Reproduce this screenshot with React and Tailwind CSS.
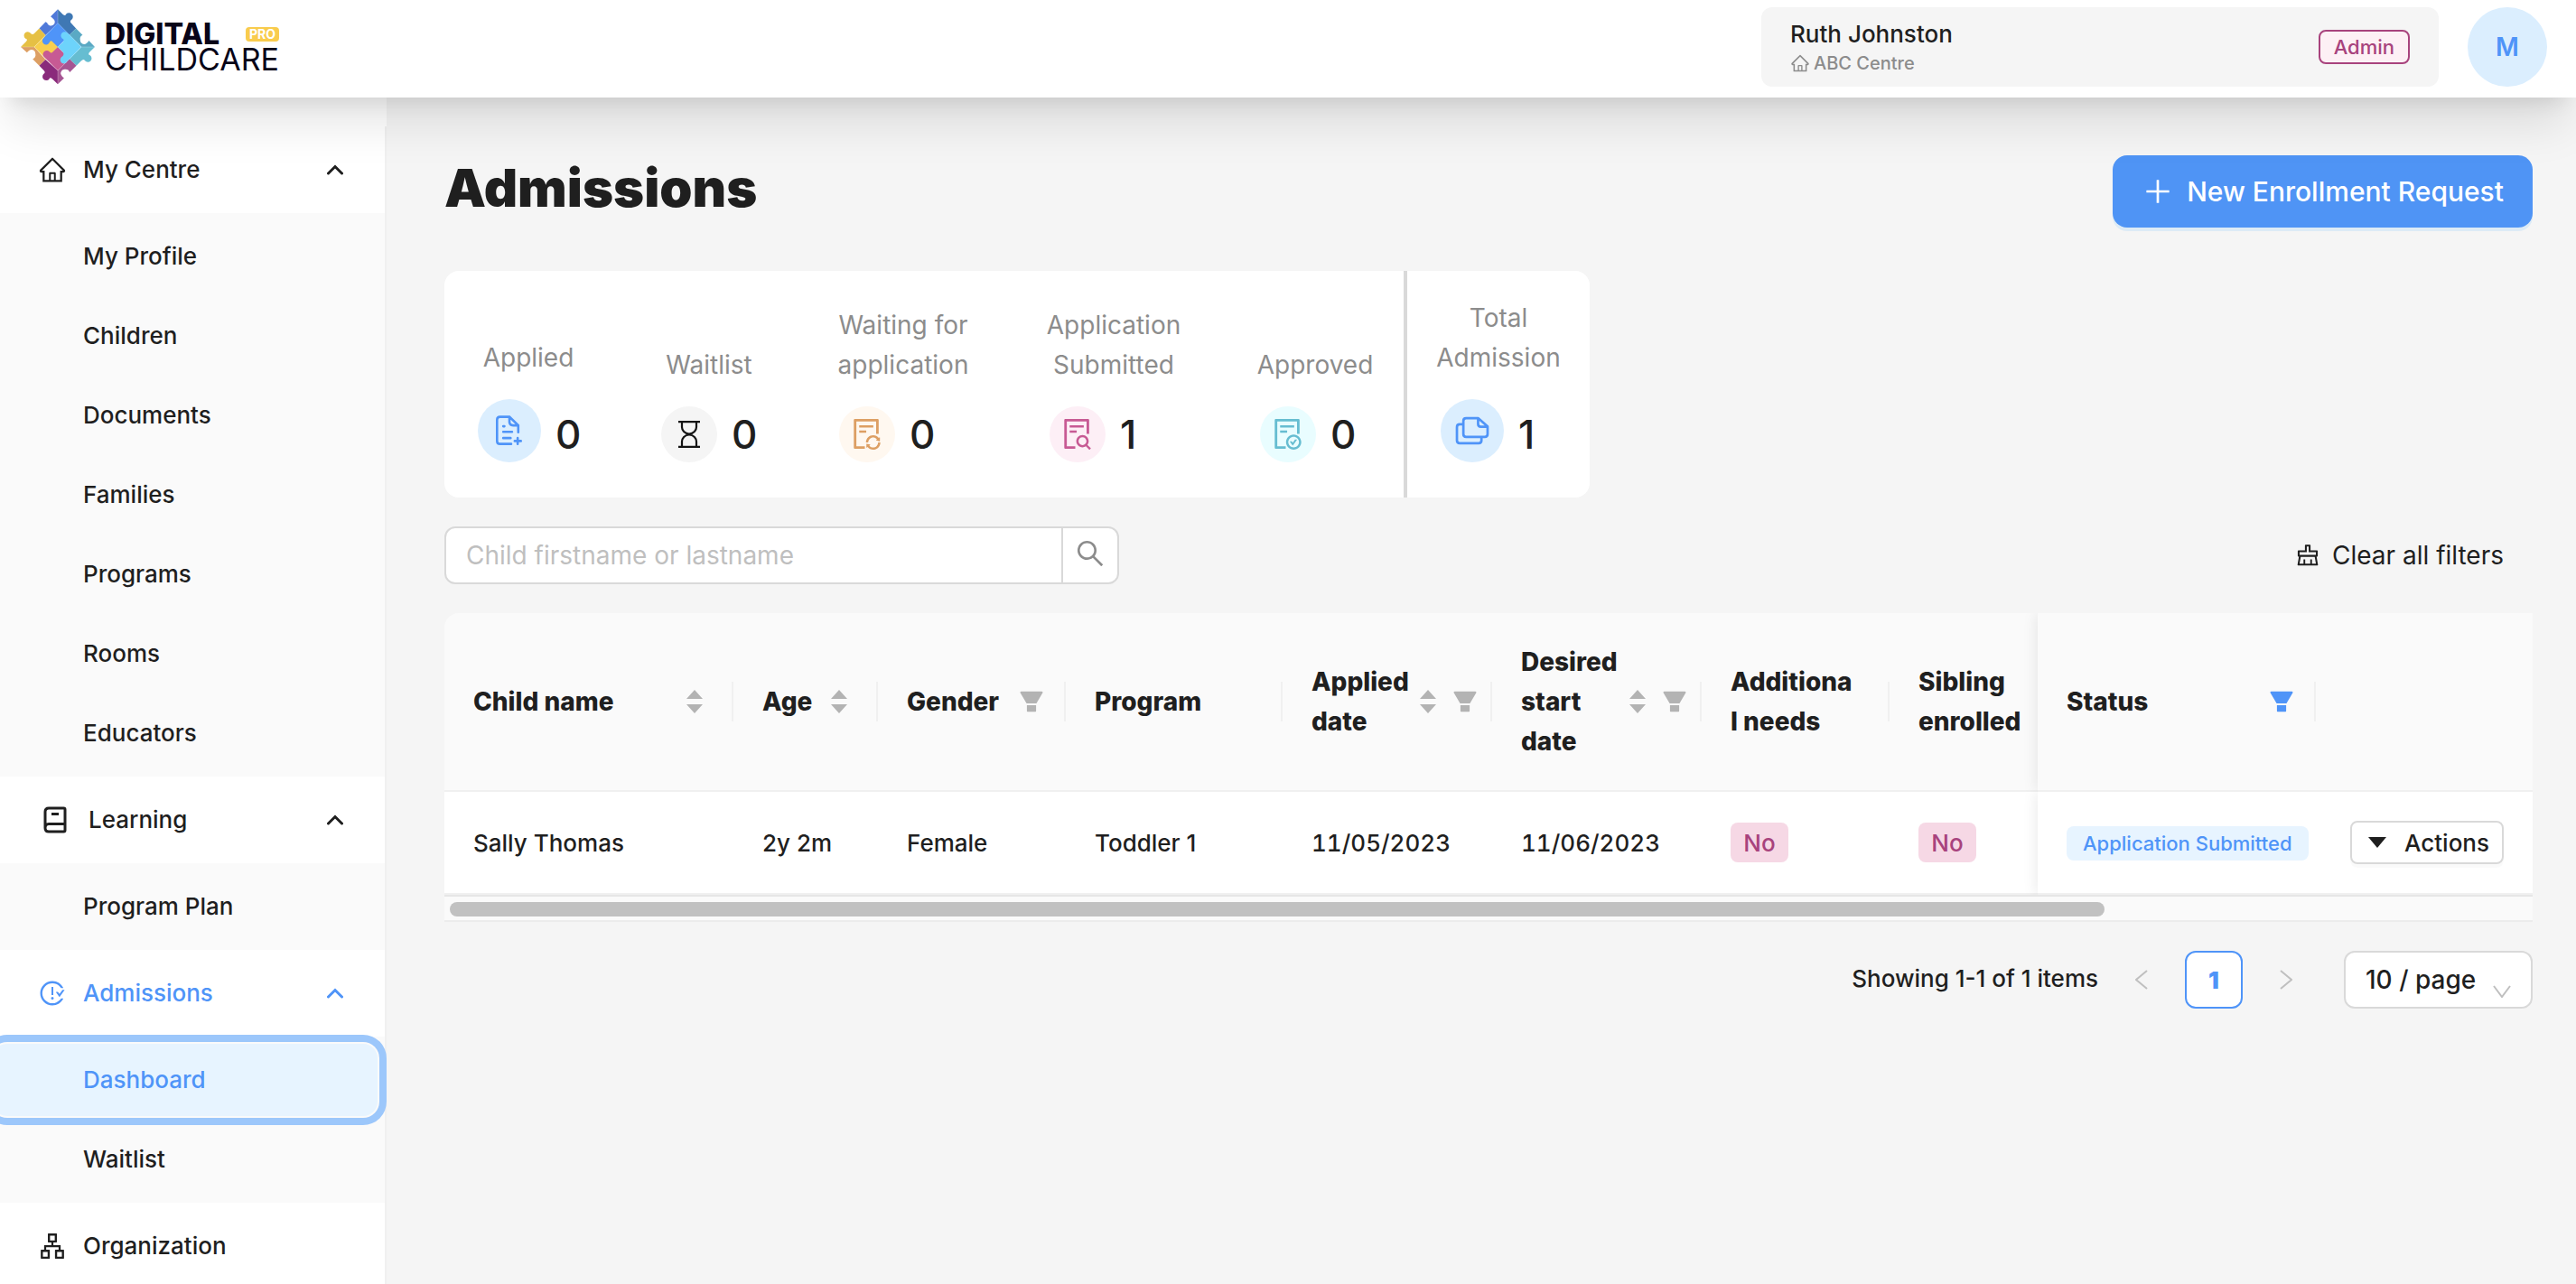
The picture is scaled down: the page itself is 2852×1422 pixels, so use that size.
import {
  AiOutlineHome,
  AiOutlineIssuesClose,
  AiOutlineApartment,
  AiOutlineClear,
  AiOutlineSearch,
  AiOutlinePlus,
  AiFillFilter,
  AiOutlineFileSync,
  AiOutlineFileSearch,
  AiOutlineFileDone,
} from "react-icons/ai";

function LogoMark() {
  return (
    <svg viewBox="17 16 250 254" className="h-[84px] w-[84px] shrink-0" aria-hidden="true">
      <path fill="#4f79d9" d="M142 17 118 41 Q124 46 130 52 A12 12 0 1 1 108 66 Q108 61 101 59 L80 81 101 104 142 65Z" />
      <path fill="#3f78b4" d="M142 17 159 34 Q168 41 170 33 A12.500 12.500 0 1 1 189 51 Q180 57 187 64 L203 81 180 104 142 65Z" />
      <path fill="#5aa9c4" d="M203 81 225 103 Q214 108 217 121 A13 13 0 0 0 238 131 Q244 127 246 122 L266 143 H221 L180 104Z" />
      <path fill="#66bdd1" d="M266 143 249 160 Q241 169 250 171 A12.500 12.500 0 1 1 233 189 Q228 181 220 190 L204 206 181 183 221 143Z" />
      <path fill="#e6c044" d="M80 81 101 104 63 143 H18 L36 125 Q43 117 34 115 A12.500 12.500 0 1 1 51 97 Q57 105 64 97Z" />
      <path fill="#dd9f63" d="M18 143 H63 L101 185 80 206 58 184 Q70 178 67 166 A13 13 0 0 0 47 154 Q41 157 39 162Z" />
      <path fill="#8a2a7b" d="M101 185 142 222 V268 L124 250 Q115 243 113 251 A12.500 12.500 0 1 1 94 234 Q102 228 96 222 L80 206Z" />
      <path fill="#a65593" d="M181 183 204 206 182 228 Q178 217 166 218 A13 13 0 0 0 153 236 Q156 243 163 247 L142 268 V222Z" />
      <path fill="#f8cf4e" d="M142 143 102 183 63 143 102 104 122 122Z" />
      <path fill="#f8cf4e" d="M110 128 134 124 142 143 122 166 90 160Z" />
      <path fill="#4f94f8" d="M142 63 182 103 142 143 125 126 Q117 119 114 128 A12.500 12.500 0 1 1 95 113 L102 104Z" />
      <path fill="#c75a94" d="M142 143 182 183 142 222 102 183 95 176 A12.500 12.500 0 1 1 115 160 Q120 166 126 159Z" />
      <path fill="#6dd3fb" d="M182 103 221 143 182 183 174 191 A12.500 12.500 0 1 1 154 177 Q166 170 159 160 L142 143 160 126 Q166 119 156 114 A12.500 12.500 0 1 1 174 96Z" />
      <path d="M142 63 221 143 142 222 63 143Z M142 17V63 M142 222V268 M18 143H63 M221 143H266" fill="none" stroke="#fff" strokeOpacity="0.35" strokeWidth="2" />
    </svg>
  );
}

function BookIcon() {
  return (
    <svg viewBox="0 0 26 30" className="h-[30px] w-[26px]" fill="none" stroke="currentColor" strokeWidth="3" aria-hidden="true">
      <path d="M6 2H22.500Q24 2 24 3.500V26.500Q24 28 22.500 28H6Q2 28 2 24V6Q2 2 6 2ZM2 24Q2 19.500 6 19.500H24M9 8.500H17" />
    </svg>
  );
}

function ChevronUp() {
  return (
    <svg viewBox="0 0 18 12" className="h-3 w-[18px]" fill="none" stroke="currentColor" strokeWidth="3" aria-hidden="true">
      <path d="M1.500 10 9 2.500 16.500 10" strokeLinecap="round" />
    </svg>
  );
}

function HourglassIcon() {
  return (
    <svg viewBox="0 0 24 30" className="h-[30px] w-6" fill="none" stroke="#141414" strokeWidth="2.200" aria-hidden="true">
      <path d="M0 1.200H24M0 28.800H24M4 1V7C4 10.500 7 14.500 12 14.500S20 10.500 20 7V1M4 29V23C4 19.500 7 15.500 12 15.500S20 19.500 20 23V29" />
    </svg>
  );
}

function FilePlusIcon() {
  return (
    <svg viewBox="84 74 92 104" className="h-[34px] w-[30px]" fill="none" stroke="#4f94f8" strokeWidth="8" strokeLinecap="round" aria-hidden="true">
      <path d="M136 171H98Q88 171 88 161V89Q88 79 98 79H130L160 108V131M130 80V96Q130 107 143 108H159M109 111H113M109 130H139M109 151H134M158 151V171M148 161H169" />
    </svg>
  );
}

function CopiesIcon() {
  return (
    <svg viewBox="1381 79 112 94" className="h-[32px] w-[38px]" fill="none" stroke="#4f94f8" strokeWidth="8" strokeLinejoin="round" aria-hidden="true">
      <path d="M1417 85H1456L1487 112V137Q1487 146 1478 146H1417Q1408 146 1408 137V94Q1408 85 1417 85ZM1456 85V104Q1456 113 1465 113H1487M1408 105H1396Q1387 105 1387 114V158Q1387 167 1396 167H1458Q1467 167 1467 158V147" />
    </svg>
  );
}

function Sorter({ label }) {
  return (
    <button type="button" aria-label={label} className="text-[#b3b3b3]">
      <svg viewBox="0 0 18 26" className="h-[26px] w-[18px]" fill="currentColor" aria-hidden="true">
        <path d="M9 0 18 10H0ZM9 26 0 16H18Z" />
      </svg>
    </button>
  );
}

function FilterButton({ label, active }) {
  return (
    <button type="button" aria-label={label} className={active ? "text-[#4f94f8]" : "text-[#b3b3b3]"}>
      <AiFillFilter className="h-8 w-8" />
    </button>
  );
}

const linkText = "text-[26px] font-medium leading-[44px]";

function MenuGroup({ icon, title, items, active, wide, open = true }) {
  return (
    <li>
      <button
        type="button"
        className={`my-2 flex h-20 w-full items-center pr-[46px] text-left ${linkText} ${wide ? "gap-6 pl-12" : "gap-[18px] pl-[42px]"} ${active ? "text-[#4f94f8]" : ""}`}
      >
        {icon}
        <span className="flex-1">{title}</span>
        {open && <ChevronUp />}
      </button>
      {open && (
        <ul className="flex flex-col gap-2 bg-[#fafafa] py-2">
          {items.map((item) => (
            <li key={item.name}>
              <a
                href="#"
                className={`-ml-2 mr-2 flex h-20 items-center rounded-2xl pl-[100px] ${linkText} ${
                  item.selected ? "bg-[#e7f4ff] text-[#4f94f8] ring-8 ring-[#9cc7fb] ring-offset-2 ring-offset-[#fafafa]" : ""
                }`}
              >
                {item.name}
              </a>
            </li>
          ))}
        </ul>
      )}
    </li>
  );
}

function Stat({ label, value, circle, width, children }) {
  return (
    <div className={`flex flex-col items-start gap-6 ${width}`}>
      <div className="flex w-full justify-center text-center text-[28px] leading-[44px] whitespace-pre text-[#8c8c8c]">{label}</div>
      <div className="flex items-end gap-4">
        <span className={`flex items-center justify-center rounded-full ${circle}`}>{children}</span>
        <span className="text-[44px] leading-[62px] font-medium">{value}</span>
      </div>
    </div>
  );
}

function HeadCell({ children, controls, divider = true, className = "" }) {
  return (
    <th scope="col" className={`border-b-2 border-[#f0f0f0] bg-[#fafafa] p-0 text-left font-extrabold ${className}`}>
      <div className="flex items-center">
        <div className="flex flex-1 items-center justify-between py-8 pl-8 text-[28px] leading-[44px]">
          <span className="whitespace-pre">{children}</span>
          {controls}
        </div>
        {divider && <span className="h-11 w-0.5 shrink-0 bg-[#f0f0f0]" />}
      </div>
    </th>
  );
}

const cell = "border-b-2 border-[#f0f0f0] bg-white py-8 pl-8 pr-0 text-[26px] font-medium whitespace-nowrap";

function NoTag() {
  return (
    <span className="inline-flex h-11 w-16 items-center justify-center rounded-lg bg-[#f6d8e5] text-[26px] text-[#a8437d]">No</span>
  );
}

export default function App() {
  return (
    <div className="flex h-screen flex-col overflow-hidden bg-[#f5f5f5] font-['Inter',sans-serif] text-[#1f1f1f]">
      <header className="relative z-10 flex h-[108px] shrink-0 items-center justify-between bg-white pr-8 pb-1 pl-[22px] shadow-[0_40px_50px_-10px_rgba(0,0,0,0.1),0_16px_20px_-12px_rgba(0,0,0,0.1)]">
        <a href="#" className="flex items-center gap-2.5 text-[#080418]">
          <LogoMark />
          <span className="flex flex-col">
            <span className="flex items-center justify-between text-[32px] leading-[28px] font-extrabold">
              DIGITAL
              <span className="rounded bg-[#f9cc4d] px-1 text-[14px] leading-4 font-bold text-white">PRO</span>
            </span>
            <span className="text-[34px] leading-[28px]">CHILDCARE</span>
          </span>
        </a>
        <div className="flex items-center gap-8">
          <div className="flex h-[88px] w-[750px] items-center justify-between rounded-xl bg-[#f5f5f5] px-8">
            <div>
              <div className="text-[26px] leading-9 font-medium">Ruth Johnston</div>
              <div className="flex items-center gap-1 text-[20px] leading-7 font-medium text-[#8c8c8c]">
                <AiOutlineHome className="h-[22px] w-[22px]" />
                ABC Centre
              </div>
            </div>
            <span className="rounded-lg border-2 border-[#a8437d] bg-[#fdf0f5] px-[15px] text-[22px] leading-[34px] font-medium text-[#a8437d]">
              Admin
            </span>
          </div>
          <button type="button" className="h-[88px] w-[88px] rounded-full bg-[#dbeefe] text-[28px] font-semibold text-[#4f94f8]">
            M
          </button>
        </div>
      </header>

      <div className="flex min-h-0 flex-1">
        <aside className="w-[428px] shrink-0 overflow-hidden bg-white pt-8">
          <nav className="min-h-full border-r-2 border-[#f0f0f0]">
            <ul className="flex flex-col">
              <MenuGroup
                icon={<AiOutlineHome className="h-8 w-8" />}
                title="My Centre"
                items={[
                  { name: "My Profile" },
                  { name: "Children" },
                  { name: "Documents" },
                  { name: "Families" },
                  { name: "Programs" },
                  { name: "Rooms" },
                  { name: "Educators" },
                ]}
              />
              <MenuGroup icon={<BookIcon />} title="Learning" wide items={[{ name: "Program Plan" }]} />
              <MenuGroup
                icon={<AiOutlineIssuesClose className="h-8 w-8" />}
                title="Admissions"
                active
                items={[{ name: "Dashboard", selected: true }, { name: "Waitlist" }]}
              />
              <MenuGroup icon={<AiOutlineApartment className="h-8 w-8" />} title="Organization" open={false} />
            </ul>
          </nav>
        </aside>

        <main className="min-w-0 flex-1 pt-16 pr-12 pl-16">
          <div className="flex items-start justify-between">
            <h1 className="text-[58px] leading-[72px] font-black">Admissions</h1>
            <button
              type="button"
              className="flex h-20 items-center gap-3.5 rounded-2xl bg-[#4f94f5] px-8 text-[30px] font-medium text-white shadow-[0_4px_0_rgba(5,145,255,0.1)]"
            >
              <AiOutlinePlus className="h-9 w-9" />
              New Enrollment Request
            </button>
          </div>

          <section className="mt-12 flex w-fit rounded-2xl bg-white">
            <div className="flex items-end gap-[91px] border-r-4 border-[#d9d9d9] px-[37px] pt-[30px] pb-[39px]">
              <Stat label="Applied" value="0" width="w-28" circle="h-[70px] w-[70px] bg-[#dbeefe]">
                <FilePlusIcon />
              </Stat>
              <Stat label="Waitlist" value="0" width="w-[106px]" circle="h-[62px] w-[62px] bg-[#f5f5f5]">
                <HourglassIcon />
              </Stat>
              <Stat label={"Waiting for\napplication"} value="0" width="w-[142px]" circle="h-[62px] w-[62px] bg-[#fff8f0]">
                <AiOutlineFileSync className="h-10 w-10 text-[#dd9f63]" />
              </Stat>
              <Stat label={"Application\nSubmitted"} value="1" width="w-[142px]" circle="h-[62px] w-[62px] bg-[#fdeff6]">
                <AiOutlineFileSearch className="h-10 w-10 text-[#c75a94]" />
              </Stat>
              <Stat label="Approved" value="0" width="w-[122px]" circle="h-[62px] w-[62px] bg-[#e9fdff]">
                <AiOutlineFileDone className="h-10 w-10 text-[#66bdd1]" />
              </Stat>
            </div>
            <div className="flex items-end px-[37px] pt-[30px] pb-[39px]">
              <Stat label={"Total\nAdmission"} value="1" width="w-32" circle="h-[70px] w-[70px] bg-[#dbeefe]">
                <CopiesIcon />
              </Stat>
            </div>
          </section>

          <div className="mt-8 flex items-center justify-between">
            <form className="flex h-16 w-[747px] overflow-hidden rounded-xl border-2 border-[#d9d9d9] bg-white">
              <input
                type="text"
                aria-label="Search children"
                placeholder="Child firstname or lastname"
                className="min-w-0 flex-1 px-[22px] text-[28px] outline-none placeholder:text-[#bfbfbf]"
              />
              <button type="button" aria-label="Search" className="flex w-[62px] items-center justify-center border-l-2 border-[#d9d9d9] pb-1 text-[#8c8c8c]">
                <AiOutlineSearch className="h-9 w-9" />
              </button>
            </form>
            <button type="button" className="flex h-16 items-center gap-3 px-8 text-[28px]">
              <AiOutlineClear className="h-[30px] w-[30px]" />
              Clear all filters
            </button>
          </div>

          <div className="mt-8 overflow-hidden rounded-tl-2xl">
            <table className="w-full table-fixed border-separate border-spacing-0">
              <colgroup>
                <col className="w-[320px]" />
                <col className="w-[160px]" />
                <col className="w-[208px]" />
                <col className="w-[240px]" />
                <col className="w-[232px]" />
                <col className="w-[232px]" />
                <col className="w-[208px]" />
                <col />
                <col className="w-[308px]" />
                <col className="w-[240px]" />
              </colgroup>
              <thead>
                <tr>
                  <HeadCell controls={<span className="mr-8 flex items-center"><Sorter label="Sort by child name" /></span>}>Child name</HeadCell>
                  <HeadCell controls={<span className="mr-8 flex items-center"><Sorter label="Sort by age" /></span>}>Age</HeadCell>
                  <HeadCell controls={<span className="mr-5 flex items-center"><FilterButton label="Filter by gender" /></span>}>Gender</HeadCell>
                  <HeadCell>Program</HeadCell>
                  <HeadCell
                    controls={
                      <span className="mr-3 flex items-center gap-4">
                        <Sorter label="Sort by applied date" />
                        <FilterButton label="Filter by applied date" />
                      </span>
                    }
                  >
                    {"Applied\ndate"}
                  </HeadCell>
                  <HeadCell
                    controls={
                      <span className="mr-3 flex items-center gap-4">
                        <Sorter label="Sort by desired start date" />
                        <FilterButton label="Filter by desired start date" />
                      </span>
                    }
                  >
                    {"Desired\nstart\ndate"}
                  </HeadCell>
                  <HeadCell>{"Additiona\nl needs"}</HeadCell>
                  <HeadCell divider={false}>{"Sibling\nenrolled"}</HeadCell>
                  <HeadCell
                    className="shadow-[0_0_16px_rgba(0,0,0,0.1)] [clip-path:inset(0_0_0_-20px)]"
                    controls={<span className="mr-5 flex items-center"><FilterButton label="Filter by status" active /></span>}
                  >
                    Status
                  </HeadCell>
                  <td className="border-b-2 border-[#f0f0f0] bg-[#fafafa]" />
                </tr>
              </thead>
              <tbody>
                <tr>
                  <td className={cell}>Sally Thomas</td>
                  <td className={cell}>2y 2m</td>
                  <td className={cell}>Female</td>
                  <td className={cell}>Toddler 1</td>
                  <td className={`${cell} tabular-nums`}>11/05/2023</td>
                  <td className={`${cell} tabular-nums`}>11/06/2023</td>
                  <td className={cell}><NoTag /></td>
                  <td className={cell}><NoTag /></td>
                  <td className={`${cell} shadow-[0_0_16px_rgba(0,0,0,0.1)] [clip-path:inset(0_0_0_-20px)]`}>
                    <span className="inline-flex h-[38px] items-center rounded-lg bg-[#e7f4ff] px-[18px] align-middle text-[22px] text-[#4f94f8]">
                      Application Submitted
                    </span>
                  </td>
                  <td className={cell}>
                    <div className="flex justify-end pr-8">
                      <button
                        type="button"
                        className="flex h-12 w-[170px] items-center justify-between rounded-lg border-2 border-[#d9d9d9] bg-white pr-3.5 pl-[18px] text-[26px] shadow-[0_4px_0_rgba(0,0,0,0.02)]"
                      >
                        <svg viewBox="0 0 20 12" className="h-3 w-5" fill="currentColor" aria-hidden="true">
                          <path d="M0 0H20L10 12Z" />
                        </svg>
                        Actions
                      </button>
                    </div>
                  </td>
                </tr>
              </tbody>
            </table>
            <div className="border-y-2 border-t-[#e6e6e6] border-b-[#ececec] bg-[#fafafa] px-1.5 pt-1.5 pb-1">
              <div className="h-4 w-[calc(80%-8px)] rounded-full bg-[#c1c1c1]" />
            </div>
          </div>

          <div className="mt-8 flex items-center justify-end text-[26px] font-medium">
            <span className="pb-1">Showing 1-1 of 1 items</span>
            <button type="button" aria-label="Previous page" className="flex h-16 w-24 items-center justify-center text-[#bfbfbf]">
              <svg viewBox="0 0 14 22" className="h-[22px] w-3.5" fill="none" stroke="currentColor" strokeWidth="2" aria-hidden="true">
                <path d="M13 1 1 11 13 21" />
              </svg>
            </button>
            <button type="button" className="h-16 w-16 rounded-xl border-2 border-[#4f94f8] bg-white font-black text-[#4f94f8]">
              1
            </button>
            <button type="button" aria-label="Next page" className="flex h-16 w-24 items-center justify-center text-[#bfbfbf]">
              <svg viewBox="0 0 14 22" className="h-[22px] w-3.5" fill="none" stroke="currentColor" strokeWidth="2" aria-hidden="true">
                <path d="M1 1 13 11 1 21" />
              </svg>
            </button>
            <div className="relative ml-4">
              <select
                aria-label="Page size"
                defaultValue="10"
                className="h-16 w-[209px] appearance-none rounded-xl border-2 border-[#d9d9d9] bg-white pl-[22px] text-[28px] font-medium"
              >
                <option value="10">10 / page</option>
                <option value="20">20 / page</option>
              </select>
              <svg viewBox="0 0 20 14" className="pointer-events-none absolute right-6 bottom-3 h-3.5 w-5" fill="none" stroke="#bfbfbf" strokeWidth="2" aria-hidden="true">
                <path d="M1 1 10 13 19 1" />
              </svg>
            </div>
          </div>
        </main>
      </div>
    </div>
  );
}
